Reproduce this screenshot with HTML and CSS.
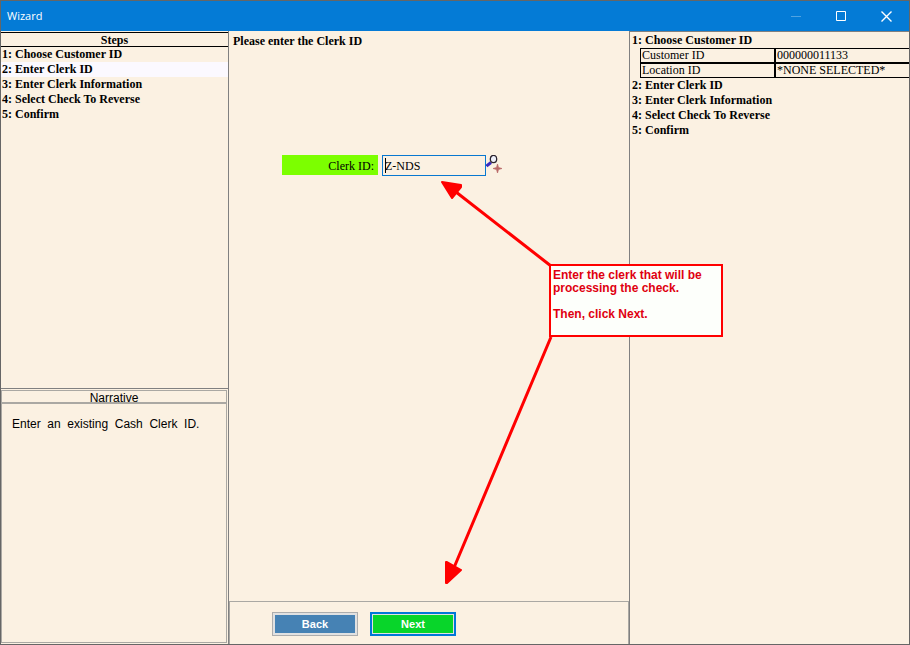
FILE: index.html
```
<!DOCTYPE html>
<html lang="en">
  <head>
    <meta charset="utf-8">
    <title>Wizard</title>
    <link rel="stylesheet" href="styles.css">
  </head>
  <body>
    <header class="titlebar">
      <h1>Wizard</h1>
      <div class="controls">
        <button type="button" aria-label="Minimize" disabled>
          <svg width="11" height="11"><path d="M0 5.5h10"/></svg>
        </button>
        <button type="button" aria-label="Maximize">
          <svg width="11" height="11"><path d="M.5 .5h9v9h-9z"/></svg>
        </button>
        <button type="button" aria-label="Close">
          <svg width="11" height="11"><path d="M.5 .5l10 10M10.5 .5l-10 10" stroke-width="1.4"/></svg>
        </button>
      </div>
    </header>
    <main>
      <aside class="left">
        <section class="steps">
          <h2>Steps</h2>
          <ul>
            <li>1: Choose Customer ID</li>
            <li class="current">2: Enter Clerk ID</li>
            <li>3: Enter Clerk Information</li>
            <li>4: Select Check To Reverse</li>
            <li>5: Confirm</li>
          </ul>
        </section>
        <section class="narrative">
          <h2>Narrative</h2>
          <p>Enter  an  existing  Cash  Clerk  ID.</p>
        </section>
      </aside>
      <form class="center">
        <div class="page">
          <h2>Please enter the Clerk ID</h2>
          <div class="field">
            <label for="clerk">Clerk ID:</label>
            <div class="entry">
              <input type="text" id="clerk" value="Z-NDS">
              <span class="caret"></span>
            </div>
            <button type="button" class="lookup" aria-label="Look up clerk">
              <svg width="17" height="20" viewBox="0 0 17 20">
                <path d="M.5 11L5 7.500" stroke="#3a2cc0" stroke-width="3"/>
                <ellipse cx="7.500" cy="4" rx="3.200" ry="3.600" fill="#eef0fa" stroke="#2b2430" stroke-width="1.300"/>
                <path d="M11.500 9l1 3.500 3.500 1-3.500 1-1 3.500-1-3.500-3.500-1 3.500-1z" fill="#b96868" stroke="#b96868" stroke-width=".7"/>
              </svg>
            </button>
          </div>
          <svg class="arrows" width="120" height="410" viewBox="0 0 120 410">
            <path d="M111 86L16 12M111 157L13 390" fill="none" stroke="#f00" stroke-width="3"/>
            <path d="M2 2L21 5L21 7L12 18zM6 382V403H7L21 390L7 382z" fill="#f00" stroke="#f00" stroke-width="2" stroke-linejoin="round"/>
          </svg>
          <div class="callout">
            <p>Enter the clerk that will be processing the check.</p>
            <p>Then, click Next.</p>
          </div>
        </div>
        <div class="buttons">
          <button type="button" class="back">Back</button>
          <button type="button" class="next">Next</button>
        </div>
      </form>
      <aside class="right">
        <ul>
          <li>1: Choose Customer ID
            <table>
              <tr><th>Customer ID</th><td>000000011133</td></tr>
              <tr><th>Location ID</th><td>*NONE SELECTED*</td></tr>
            </table>
          </li>
          <li>2: Enter Clerk ID</li>
          <li>3: Enter Clerk Information</li>
          <li>4: Select Check To Reverse</li>
          <li>5: Confirm</li>
        </ul>
      </aside>
    </main>
  </body>
</html>
```
FILE: styles.css
```
*{
  box-sizing: border-box;
  margin: 0;
  padding: 0;
}
body{
  display: flex;
  flex-direction: column;
  height: 100vh;
  border: 1px solid #666;
  background: #fbf1e2;
  color: #000;
  font: 12px/15px "Liberation Serif", serif;
}
ul{
  list-style: none;
  font-weight: bold;
}
h2{
  font-size: 12px;
}

/* title bar */
.titlebar{
  display: flex;
  justify-content: space-between;
  height: 30px;
  background: #047bd6;
  color: #fff;
}
.titlebar h1{
  padding-left: 6px;
  font: 11px/30px "Open Sans", sans-serif;
}
.controls{
  display: flex;
}
.controls button{
  display: flex;
  align-items: center;
  justify-content: center;
  width: 45px;
  border: 0;
  background: none;
}
.controls button:disabled{
  opacity: .3;
}
.controls path{
  fill: none;
  stroke: #fff;
}

main{
  flex: 1;
  display: grid;
  grid-template-columns: 228px 1fr 280px;
  min-height: 0;
}

/* left column */
.left{
  display: grid;
  grid-template-rows: 7fr 5fr;
  border-right: 1px solid #808080;
}
.steps{
  padding-top: 1px;
  border-bottom: 1px solid #808080;
}
.steps h2{
  height: 15px;
  border: solid #000;
  border-width: 1px 0;
  line-height: 14px;
  text-align: center;
}
.steps li{
  padding-left: 1px;
}
.current{
  background: #fbf9ff;
}
.narrative{
  margin: 1px 1px 1px 0;
  border: 1px solid #aaa8a3;
  font-family: "Liberation Sans", sans-serif;
}
.narrative h2{
  height: 13px;
  border-bottom: 2px solid #aaa8a3;
  font-weight: normal;
  line-height: 14px;
  text-align: center;
}
.narrative p{
  padding: 13px 10px;
  white-space: pre-wrap;
}

/* middle column */
.center{
  display: flex;
  flex-direction: column;
}
.page{
  position: relative;
  flex: 1;
}
.page h2{
  padding: 3px 4px;
}
.field{
  display: flex;
  gap: 4px;
  margin: 103px 0 0 53px;
}
.field label{
  width: 96px;
  height: 20px;
  padding-right: 4px;
  background: #7cff00;
  line-height: 22px;
  text-align: right;
}
.entry{
  position: relative;
}
.field input{
  display: block;
  width: 104px;
  height: 21px;
  padding: 1px 2px 0;
  border: 1px solid #0878d0;
  outline: 0;
  background: none;
  font: 12px "Liberation Serif", serif;
}
.caret{
  position: absolute;
  top: 3px;
  left: 3px;
  width: 1px;
  height: 15px;
  background: #000;
}
.lookup{
  height: 20px;
  margin-left: -4px;
  border: 0;
  background: none;
}
.arrows{
  position: absolute;
  top: 149px;
  left: 211px;
}
.callout{
  position: absolute;
  z-index: 1;
  top: 233px;
  left: 320px;
  width: 174px;
  height: 73px;
  padding: 3px 2px;
  border: 2px solid #f00;
  background: #fdfffb;
  color: #e00010;
  font: bold 12px/13px "Liberation Sans", sans-serif;
}
.callout p + p{
  margin-top: 13px;
}
.buttons{
  display: flex;
  gap: 12px;
  padding: 10px 42px 8px;
  border: solid #aaa8a3;
  border-width: 1px 1px 0;
}
.buttons button{
  width: 86px;
  height: 24px;
  border: 1px solid #adadad;
  box-shadow: inset 0 0 0 2px #e1e1e1;
  color: #fff;
  font: bold 11px "Liberation Sans", sans-serif;
}
.back{
  background: #4682b4;
}
.buttons .next{
  border: 2px solid #0078d7;
  box-shadow: inset 0 0 0 1px #e1e1e1;
  background: #08d52a;
}

/* right column */
.right{
  overflow: hidden;
  padding: 1px 0 0 2px;
  border: solid #808080;
  border-width: 1px 0 0 1px;
}
table{
  width: 100%;
  margin-left: 8px;
  border-spacing: 0;
}
th, td{
  height: 15px;
  padding: 0 1px;
  border: 1px solid #000;
  font-weight: normal;
  line-height: 13px;
  text-align: left;
}
th{
  width: 135px;
}
```
